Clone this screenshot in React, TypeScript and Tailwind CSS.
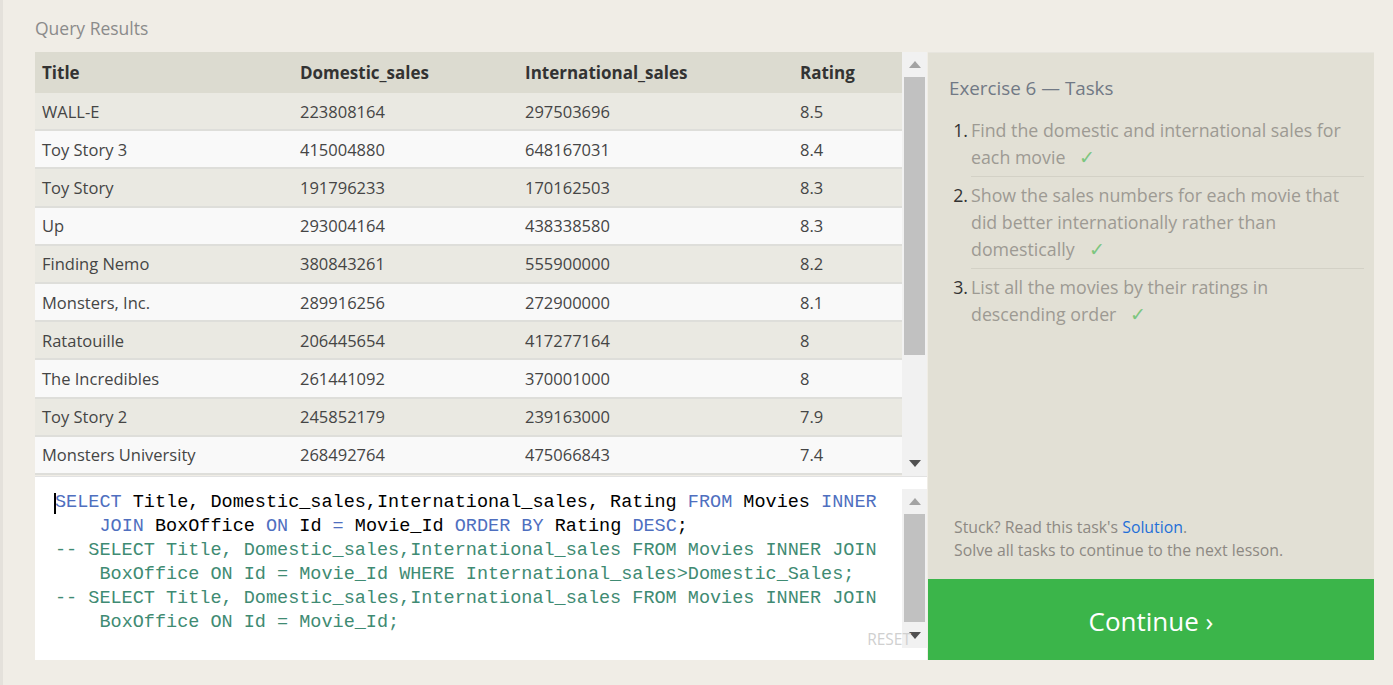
import React from 'react';

/* ─────────────── data ─────────────── */
const rows: [string, string, string, string][] = [
  ['WALL-E', '223808164', '297503696', '8.5'],
  ['Toy Story 3', '415004880', '648167031', '8.4'],
  ['Toy Story', '191796233', '170162503', '8.3'],
  ['Up', '293004164', '438338580', '8.3'],
  ['Finding Nemo', '380843261', '555900000', '8.2'],
  ['Monsters, Inc.', '289916256', '272900000', '8.1'],
  ['Ratatouille', '206445654', '417277164', '8'],
  ['The Incredibles', '261441092', '370001000', '8'],
  ['Toy Story 2', '245852179', '239163000', '7.9'],
  ['Monsters University', '268492764', '475066843', '7.4'],
];

const tasks = [
  { n: 1, text: 'Find the domestic and international sales for each movie' },
  { n: 2, text: 'Show the sales numbers for each movie that did better internationally rather than domestically' },
  { n: 3, text: 'List all the movies by their ratings in descending order' },
];

const sans = "font-['Open_Sans',sans-serif]";
const cols = 'grid grid-cols-[258px_225px_275px_1fr]';

/* ─────────────── small pieces ─────────────── */
const Arrow: React.FC<{ up?: boolean; dark?: boolean }> = ({ up, dark }) => (
  <svg width="12" height="7" viewBox="0 0 12 7" aria-hidden="true">
    <path d={up ? 'M6 0 L12 7 L0 7 Z' : 'M0 0 L12 0 L6 7 Z'} fill={dark ? '#505050' : '#a3a3a3'} />
  </svg>
);

const Scrollbar: React.FC<{ thumbTop: number; thumbHeight: number }> = ({ thumbTop, thumbHeight }) => (
  <div className="w-[25px] h-full bg-[#f1f1f1] flex flex-col items-center shrink-0">
    <div className="h-[25px] w-full flex items-center justify-center">
      <Arrow up />
    </div>
    <div className="flex-1 w-full px-[2px]">
      <div className="w-full bg-[#c1c1c1]" style={{ marginTop: thumbTop, height: thumbHeight }} />
    </div>
    <div className="h-[25px] w-full flex items-center justify-center">
      <Arrow dark />
    </div>
  </div>
);

const Kw: React.FC<{ children: React.ReactNode }> = ({ children }) => (
  <span className="text-[#4f6fbf]">{children}</span>
);

/* ─────────────── app ─────────────── */
export default function App() {
  return (
    <div className={`min-h-screen bg-[#f0ede6] border-l-[3px] border-[#e4e1db] pl-[32px] ${sans}`}>
      <h2 className="h-[52px] pt-[15px] text-[17.5px] leading-[26px] text-[#8b8b8b]">Query Results</h2>

      <div className="flex gap-[1px] h-[608px]">
        {/* left column */}
        <div className="w-[892px] flex flex-col">
          {/* results table */}
          <div className="h-[425px] flex border-b border-[#e2e2e2]">
            <div className="w-[867px] text-[16.5px]">
              <div className={`${cols} h-[41px] items-center bg-[#dcdbd0] font-bold text-[17px] text-[#333]`}>
                <div className="pl-[7px]">Title</div>
                <div className="pl-[7px]">Domestic_sales</div>
                <div className="pl-[7px]">International_sales</div>
                <div className="pl-[7px]">Rating</div>
              </div>
              {rows.map((r, i) => (
                <div
                  key={r[0]}
                  className={`${cols} h-[38.2px] items-center border-b-2 border-[#dededa] text-[#454545] ${
                    i % 2 === 0 ? 'bg-[#eae9e2]' : 'bg-[#f9f9f9]'
                  }`}
                >
                  {r.map((c, j) => (
                    <div key={j} className="pl-[7px] pt-[2px]">{c}</div>
                  ))}
                </div>
              ))}
            </div>
            <Scrollbar thumbTop={0} thumbHeight={278} />
          </div>

          {/* editor */}
          <div className="relative flex-1 bg-white flex">
            <div className="flex-1 pt-[14px] pl-[20px] font-['Liberation_Mono',monospace] text-[18.5px] leading-[24px] text-black whitespace-pre">
              <div className="relative">
                <span className="absolute left-[-1px] top-[2px] w-[2px] h-[21px] bg-black" />
                <Kw>SELECT</Kw> Title, Domestic_sales,International_sales, Rating <Kw>FROM</Kw> Movies <Kw>INNER</Kw>
              </div>
              <div>
                {'    '}
                <Kw>JOIN</Kw> BoxOffice <Kw>ON</Kw> Id <Kw>=</Kw> Movie_Id <Kw>ORDER BY</Kw> Rating <Kw>DESC</Kw>;
              </div>
              <div className="text-[#3f8b73]">-- SELECT Title, Domestic_sales,International_sales FROM Movies INNER JOIN</div>
              <div className="text-[#3f8b73]">{'    '}BoxOffice ON Id = Movie_Id WHERE International_sales&gt;Domestic_Sales;</div>
              <div className="text-[#3f8b73]">-- SELECT Title, Domestic_sales,International_sales FROM Movies INNER JOIN</div>
              <div className="text-[#3f8b73]">{'    '}BoxOffice ON Id = Movie_Id;</div>
            </div>
            <div className="py-[12px] h-full">
              <Scrollbar thumbTop={0} thumbHeight={108} />
            </div>
            <span className="absolute right-[16px] bottom-[9px] text-[15.5px] text-[#d0d0d0]">RESET</span>
          </div>
        </div>

        {/* right panel */}
        <div className="w-[446px] bg-[#e2e0d5] border-t border-[#e7e5de] flex flex-col">
          <div className="flex-1 pl-[21px] pr-[10px] pt-[23px]">
            <h3 className="text-[18.8px] leading-[24px] text-[#717985]">Exercise 6 — Tasks</h3>
            <ol className="mt-[12px] text-[17.8px] leading-[27px]">
              {tasks.map((t) => (
                <li key={t.n} className="flex">
                  <span className="w-[19px] shrink-0 text-right pt-[5px] text-[#333]">{t.n}.</span>
                  <div
                    className={`flex-1 ml-[3px] py-[5px] text-[#9d9a93] ${
                      t.n < tasks.length ? 'border-b border-[#d3d1c6]' : ''
                    }`}
                  >
                    {t.text}
                    <span className="inline-block ml-[14px] leading-none text-[#7cc67f] font-['DejaVu_Sans',sans-serif] text-[19px] font-light">
                      ✓
                    </span>
                  </div>
                </li>
              ))}
            </ol>
          </div>

          <div className="pl-[26px] pb-[17px] text-[15.8px] leading-[23px] text-[#8d8983]">
            <p>
              Stuck? Read this task's <span className="text-[#1f6fd8]">Solution</span>.
            </p>
            <p>Solve all tasks to continue to the next lesson.</p>
          </div>

          <button className="h-[81px] w-full pt-[4px] bg-[#3bb54a] text-white text-[26px] flex items-center justify-center">
            Continue ›
          </button>
        </div>
      </div>
    </div>
  );
}
